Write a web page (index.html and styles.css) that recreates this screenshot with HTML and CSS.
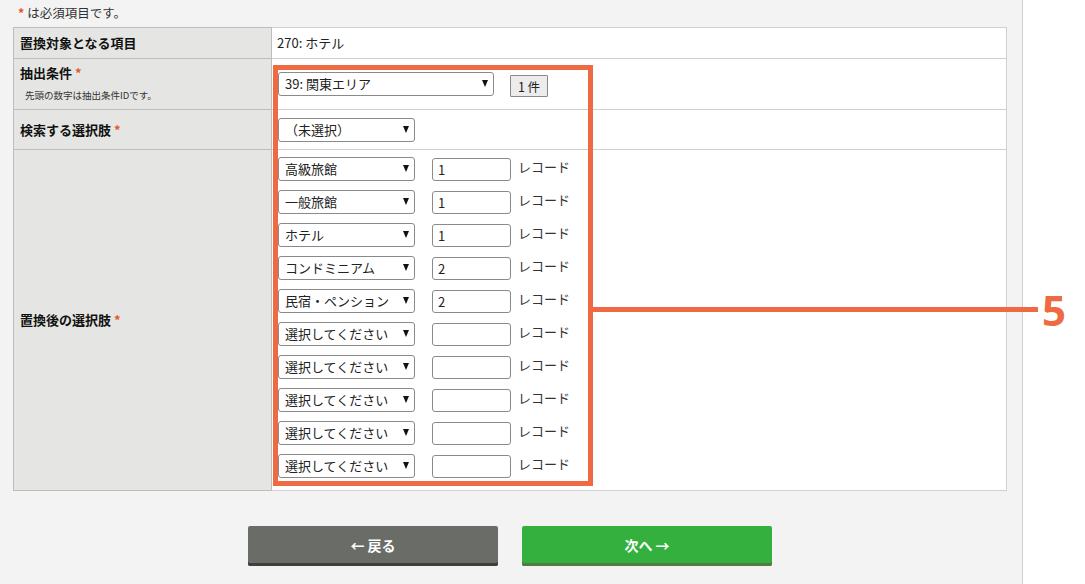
FILE: index.html
```html
<!DOCTYPE html>
<html lang="ja">
<head>
<meta charset="utf-8">
<link rel="stylesheet" href="styles.css">
</head>
<body>
<div class="page">
  <p class="note"><span class="req">*</span> は必須項目です。</p>
  <div class="form-wrap">
    <table class="form">
      <tr class="r1">
        <th>置換対象となる項目</th>
        <td class="val">270: ホテル</td>
      </tr>
      <tr class="r2">
        <th class="top"><div class="lbl">抽出条件 <span class="req">*</span></div><div class="sub">先頭の数字は抽出条件IDです。</div></th>
        <td class="top">
          <div class="cond">
            <div class="sel wide"><select><option>39: 関東エリア</option></select></div>
            <button class="count" type="button">1&nbsp;件</button>
          </div>
        </td>
      </tr>
      <tr class="r3">
        <th>検索する選択肢 <span class="req">*</span></th>
        <td><div class="sel"><select><option>（未選択）</option></select></div></td>
      </tr>
      <tr class="r4">
        <th>置換後の選択肢 <span class="req">*</span></th>
        <td class="top">
          <div class="list">
            <div class="item"><div class="sel"><select><option>高級旅館</option></select></div><input class="num" type="text" value="1"><span class="unit">レコード</span></div>
            <div class="item"><div class="sel"><select><option>一般旅館</option></select></div><input class="num" type="text" value="1"><span class="unit">レコード</span></div>
            <div class="item"><div class="sel"><select><option>ホテル</option></select></div><input class="num" type="text" value="1"><span class="unit">レコード</span></div>
            <div class="item"><div class="sel"><select><option>コンドミニアム</option></select></div><input class="num" type="text" value="2"><span class="unit">レコード</span></div>
            <div class="item"><div class="sel"><select><option>民宿・ペンション</option></select></div><input class="num" type="text" value="2"><span class="unit">レコード</span></div>
            <div class="item"><div class="sel"><select><option>選択してください</option></select></div><input class="num" type="text" value=""><span class="unit">レコード</span></div>
            <div class="item"><div class="sel"><select><option>選択してください</option></select></div><input class="num" type="text" value=""><span class="unit">レコード</span></div>
            <div class="item"><div class="sel"><select><option>選択してください</option></select></div><input class="num" type="text" value=""><span class="unit">レコード</span></div>
            <div class="item"><div class="sel"><select><option>選択してください</option></select></div><input class="num" type="text" value=""><span class="unit">レコード</span></div>
            <div class="item"><div class="sel"><select><option>選択してください</option></select></div><input class="num" type="text" value=""><span class="unit">レコード</span></div>
          </div>
        </td>
      </tr>
    </table>
    <div class="anno-box"></div>
    <div class="anno-line"></div>
    <div class="anno-num">5</div>
  </div>
  <div class="actions">
    <button class="btn back" type="button">←&thinsp;戻る</button>
    <button class="btn next" type="button">次へ&thinsp;→</button>
  </div>
</div>
</body>
</html>
```

FILE: styles.css
```css
html, body {
  margin: 0;
  padding: 0;
  background: #ffffff;
}
body {
  font-family: "Noto Sans CJK JP", "Noto Sans", sans-serif;
  font-size: 13px;
  color: #222;
}
.page {
  width: 994px;
  height: 584px;
  padding: 0 15px 0 13px;
  background: #f3f3f3;
  border-right: 1px solid #cfcfcf;
  box-sizing: content-box;
}
.note {
  margin: 0;
  height: 27px;
  line-height: 26px;
  padding-left: 5px;
  font-size: 12.5px;
  color: #333;
}
.req {
  color: #e4572e;
  font-weight: bold;
}
.form-wrap {
  position: relative;
}
table.form {
  width: 994px;
  border-collapse: collapse;
  table-layout: fixed;
}
table.form th {
  width: 245px;
  background: #e5e6e3;
  border: 1px solid #bdbdbd;
  text-align: left;
  font-weight: bold;
  font-size: 13px;
  padding: 0 6px;
  vertical-align: middle;
  color: #111;
  line-height: 18px;
}
table.form td {
  background: #fff;
  border: 1px solid #d0d0d0;
  padding: 0 6px 0 6px;
  vertical-align: middle;
  line-height: 18px;
}
table.form .top {
  vertical-align: top;
}
table.form .r1 th, table.form .r1 td { height: 30px; }
table.form .r2 th, table.form .r2 td { height: 50px; }
table.form .r3 th, table.form .r3 td { height: 39px; }
table.form .r4 th, table.form .r4 td { height: 340px; }
table.form .r4 th { vertical-align: middle; }
table.form .val {
  padding-left: 5px;
  color: #222;
}
table.form .r2 th {
  padding-top: 5px;
  height: 45px;
}
.lbl { line-height: 18px; }
.sub {
  font-size: 9.5px;
  font-weight: normal;
  padding-left: 5px;
  margin-top: 7px;
  line-height: 12px;
  color: #333;
}
table.form .r2 td {
  padding-top: 13px;
  height: 37px;
}
.cond {
  display: flex;
  align-items: flex-end;
  gap: 16px;
}
.sel {
  position: relative;
  width: 137px;
  height: 24px;
  flex: none;
}
.sel.wide { width: 216px; }
.sel select {
  appearance: none;
  -webkit-appearance: none;
  width: 100%;
  height: 24px;
  box-sizing: border-box;
  border: 1px solid #8a8a8a;
  border-radius: 3px;
  background: #fff;
  font-family: "Noto Sans CJK JP", "Noto Sans", sans-serif;
  font-size: 13px;
  color: #222;
  padding: 0 18px 0 6px;
  line-height: 22px;
}
.sel::after {
  content: "";
  position: absolute;
  right: 6px;
  top: 8px;
  border-left: 3.5px solid transparent;
  border-right: 3.5px solid transparent;
  border-top: 7px solid #111;
  pointer-events: none;
}
.count {
  width: 38px;
  height: 22px;
  box-sizing: border-box;
  border: 1px solid #8a8a8a;
  border-radius: 1px;
  background: #ececec;
  font-family: "Noto Sans CJK JP", "Noto Sans", sans-serif;
  font-size: 12.5px;
  color: #222;
  padding: 0;
  margin-bottom: -1px;
}
.list {
  display: flex;
  flex-direction: column;
  gap: 9px;
  padding-top: 7px;
}
.item {
  display: flex;
  align-items: center;
  height: 24px;
}
.num {
  width: 79px;
  height: 23px;
  box-sizing: border-box;
  margin: 0 0 0 17px;
  border: 1px solid #8a8a8a;
  border-radius: 3px;
  padding: 0 5px;
  font-family: "Noto Sans CJK JP", "Noto Sans", sans-serif;
  font-size: 13px;
  color: #222;
}
.unit {
  margin-left: 7px;
  margin-top: -4px;
  color: #333;
  font-size: 13px;
}
.anno-box {
  position: absolute;
  left: 260px;
  top: 38px;
  width: 320px;
  height: 421px;
  box-sizing: border-box;
  border: 5px solid #ee6a43;
}
.anno-line {
  position: absolute;
  left: 580px;
  top: 280px;
  width: 445px;
  height: 5px;
  background: #ee6a43;
}
.anno-num {
  position: absolute;
  left: 1029px;
  top: 258px;
  font-family: "Open Sans", "Noto Sans", sans-serif;
  font-weight: bold;
  font-size: 42px;
  line-height: 50px;
  color: #ee6a43;
}
.actions {
  display: flex;
  justify-content: center;
  gap: 24px;
  margin-top: 35px;
}
.btn {
  width: 250px;
  height: 40px;
  border: none;
  border-radius: 2px;
  font-family: "Noto Sans CJK JP", "Noto Sans", sans-serif;
  font-weight: bold;
  font-size: 14px;
  color: #fff;
  padding: 0 0 3px;
}
.back {
  background: #6a6d67;
  box-shadow: inset 0 -3px 0 #3f403d;
}
.next {
  background: #34b03e;
  box-shadow: inset 0 -3px 0 #557a42;
}
```
